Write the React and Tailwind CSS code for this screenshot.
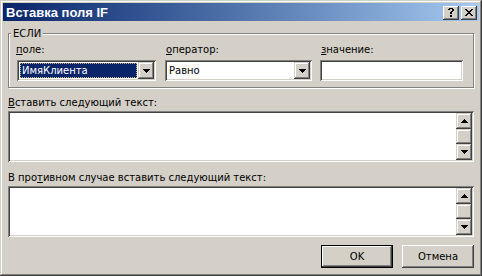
const raised =
  "shadow-[inset_-1px_-1px_0_#404040,inset_1px_1px_0_#ffffff,inset_-2px_-2px_0_#808080,inset_2px_2px_0_#d4d0c8]";
const raisedSoft =
  "shadow-[inset_-1px_-1px_0_#404040,inset_1px_1px_0_#d4d0c8,inset_-2px_-2px_0_#808080,inset_2px_2px_0_#ffffff]";
const sunken =
  "shadow-[inset_1px_1px_0_#808080,inset_-1px_-1px_0_#ffffff,inset_2px_2px_0_#404040,inset_-2px_-2px_0_#d4d0c8]";

// tiny pixel glyphs, one string per row
const Pixels = ({ rows, className = "" }) => (
  <svg
    width={rows[0].length}
    height={rows.length}
    shapeRendering="crispEdges"
    className={className}
  >
    {rows.map((r, y) =>
      r.split("").map((c, x) => (c === "X" ? <rect key={`${x}-${y}`} x={x} y={y} width="1" height="1" fill="#000" /> : null))
    )}
  </svg>
);

const closeGlyph = ["XX....XX", ".XX..XX.", "..XXXX..", "...XX...", "..XXXX..", ".XX..XX.", "XX....XX"];
const helpGlyph = [".XXXX.", "XX..XX", "....XX", "...XX.", "..XX..", "..XX..", "......", "..XX..", "..XX.."];
const downGlyph = ["XXXXXXX", ".XXXXX.", "..XXX..", "...X..."];
const upGlyph = ["...X...", "..XXX..", ".XXXXX.", "XXXXXXX"];

const DropButton = () => (
  <div className={`w-[16px] h-[17px] bg-[#d4d0c8] flex items-center justify-center ${raisedSoft}`}>
    <Pixels rows={downGlyph} />
  </div>
);

const ScrollBar = () => (
  <div className="w-[16px] flex flex-col">
    <div className={`h-[16px] bg-[#d4d0c8] flex items-center justify-center ${raisedSoft}`}>
      <Pixels rows={upGlyph} />
    </div>
    <div className={`flex-1 bg-[#d4d0c8] ${raisedSoft}`} />
    <div className={`h-[16px] bg-[#d4d0c8] flex items-center justify-center ${raisedSoft}`}>
      <Pixels rows={downGlyph} />
    </div>
  </div>
);

const TextArea = () => (
  <div className={`h-[51px] bg-white p-[2px] flex justify-end ${sunken}`}>
    <ScrollBar />
  </div>
);

export default function App() {
  return (
    <div
      className={`w-[482px] h-[276px] bg-[#d4d0c8] flex flex-col text-black text-[10px] leading-[13px] font-['DejaVu_Sans',Verdana,sans-serif] ${raisedSoft}`}
    >
      {/* title bar */}
      <div className="mx-[3px] mt-[3px] h-[18px] bg-linear-to-r from-[#0a246a] to-[#a6caf0] flex items-center pl-[3px] pr-[2px]">
        <span className="text-white font-bold text-[13px] font-['Liberation_Sans',Arial,sans-serif]">Вставка поля IF</span>
        <div className="ml-auto flex gap-[2px] mt-[1px]">
          <div className={`w-[16px] h-[14px] bg-[#d4d0c8] flex items-center justify-center ${raised}`}>
            <Pixels rows={helpGlyph} />
          </div>
          <div className={`w-[16px] h-[14px] bg-[#d4d0c8] flex items-center justify-center ${raised}`}>
            <Pixels rows={closeGlyph} />
          </div>
        </div>
      </div>

      <div className="px-[8px] flex flex-col">
        {/* ЕСЛИ group */}
        <div className="relative mt-[12px] h-[55px] border border-[#808080] shadow-[inset_1px_1px_0_#ffffff,1px_1px_0_#ffffff] pt-[9px] pl-[8px] flex">
          <span className="absolute left-[2px] top-[-7px] px-[2px] bg-[#d4d0c8]">ЕСЛИ</span>

          <div className="w-[139px] flex flex-col">
            <span className="-ml-[1px]">
              <u>п</u>оле:
            </span>
            <div className={`mt-[4px] h-[21px] bg-white p-[2px] flex ${sunken}`}>
              <div className="flex-1 p-[1px]">
                <div className="h-full bg-[#0a246a] text-white pl-[1px] border border-dotted border-[#c9b98a] leading-[13px]">
                  ИмяКлиента
                </div>
              </div>
              <DropButton />
            </div>
          </div>

          <div className="w-[147px] ml-[9px] flex flex-col">
            <span className="pl-[1px]">
              <u>о</u>ператор:
            </span>
            <div className={`mt-[4px] h-[21px] bg-white p-[2px] flex ${sunken}`}>
              <div className="flex-1 pl-[2px] pt-[2px]">Равно</div>
              <DropButton />
            </div>
          </div>

          <div className="w-[143px] ml-[8px] flex flex-col">
            <span className="pl-[1px]">
              <u>з</u>начение:
            </span>
            <div className={`mt-[4px] h-[21px] bg-white ${sunken}`} />
          </div>
        </div>

        <span className="mt-[8px]">
          <u>В</u>ставить следующий текст:
        </span>
        <div className="mt-[2px]">
          <TextArea />
        </div>

        <span className="mt-[9px]">
          В про<u>т</u>ивном случае вставить следующий текст:
        </span>
        <div className="mt-[2px]">
          <TextArea />
        </div>

        <div className="mt-[8px] flex justify-end gap-[9px]">
          <div className="w-[72px] h-[23px] border border-black">
            <div className={`w-full h-full bg-[#d4d0c8] flex items-center justify-center ${raised}`}>OK</div>
          </div>
          <div className={`w-[72px] h-[23px] bg-[#d4d0c8] flex items-center justify-center ${raised}`}>
            Отмена
          </div>
        </div>
      </div>
    </div>
  );
}
